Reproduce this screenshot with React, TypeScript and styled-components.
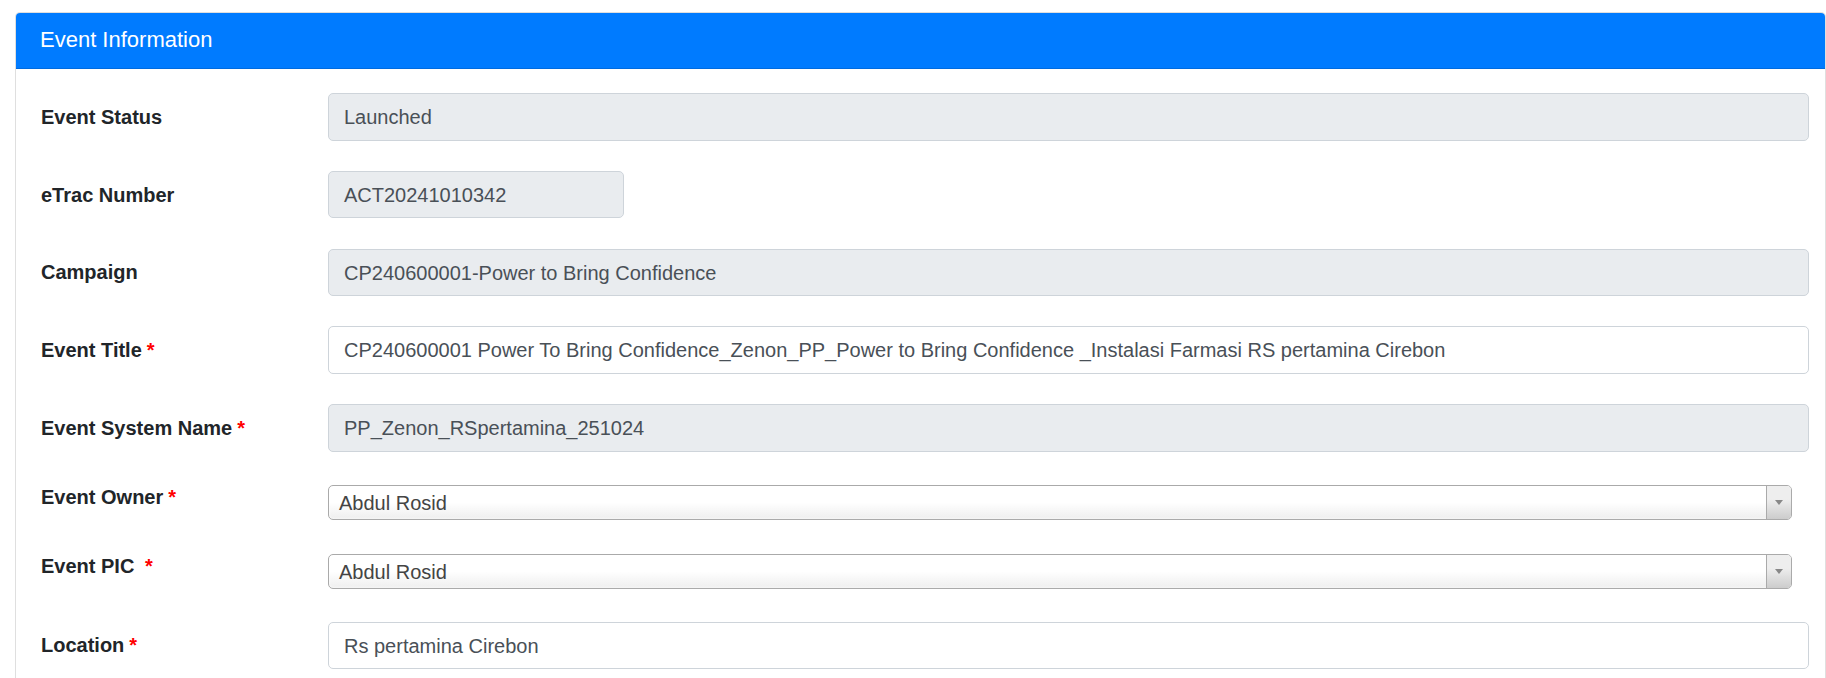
import React from "react";
import styled, { createGlobalStyle } from "styled-components";

const GlobalStyle = createGlobalStyle`
  html, body {
    margin: 0;
    padding: 0;
    background: #fff;
    font-family: "Liberation Sans", Arial, sans-serif;
    overflow: hidden;
  }
  * { box-sizing: border-box; }
`;

const Page = styled.div`
  padding: 12px 0 0 15px;
`;

const Card = styled.section`
  width: 1811px;
  border: 1px solid rgba(0, 0, 0, 0.125);
  border-radius: 5px;
  background: #fff;
  overflow: hidden;
`;

const CardHeader = styled.header`
  background: #007bff;
  color: #fff;
  padding: 15px 25px;
  margin: -1px -1px 0 -1px;
  border-bottom: 1px solid rgba(0, 0, 0, 0.125);
  border-radius: 5px 5px 0 0;
  font-size: 22px;
  line-height: 26px;
`;

const CardBody = styled.div`
  padding: 24px 16px 40px 25px;
  display: flex;
  flex-direction: column;
`;

const Row = styled.div<{ $top: number; $align?: "center" | "start" }>`
  display: grid;
  grid-template-columns: 287px 1fr;
  align-items: ${(p) => p.$align ?? "center"};
  margin-top: ${(p) => p.$top}px;
`;

const Label = styled.label`
  display: flex;
  align-items: center;
  min-height: 47.5px;
  font-weight: 700;
  font-size: 20px;
  line-height: 30px;
  color: #212529;
  white-space: pre;
`;

const Required = styled.span`
  color: #ff0000;
  margin-left: 5px;
`;

const TextBox = styled.div<{ $disabled?: boolean; $width?: string }>`
  width: ${(p) => p.$width ?? "100%"};
  height: 47.5px;
  padding: 8px 15px;
  border: 1px solid #ced4da;
  border-radius: 5px;
  background: ${(p) => (p.$disabled ? "#e9ecef" : "#fff")};
  color: #495057;
  font-size: 20px;
  line-height: 30px;
  white-space: nowrap;
  overflow: hidden;
`;

const Select = styled.div`
  width: calc(100% - 17px);
  height: 35px;
  margin-top: 11px;
  display: flex;
  border: 1px solid #aaa;
  border-radius: 5px;
  background: linear-gradient(to top, #eeeeee 0%, #ffffff 50%);
  box-shadow: 0 0 3px #fff inset;
  overflow: hidden;
`;

const SelectValue = styled.span`
  flex: 1;
  padding-left: 10px;
  color: #444;
  font-size: 20px;
  line-height: 34px;
  white-space: nowrap;
`;

const SelectArrow = styled.span`
  width: 25px;
  display: flex;
  align-items: center;
  justify-content: center;
  border-left: 1px solid #aaa;
  background: linear-gradient(to top, #cccccc 0%, #eeeeee 60%);
  &::after {
    content: "";
    width: 0;
    height: 0;
    margin-top: 1px;
    border-left: 4.5px solid transparent;
    border-right: 4.5px solid transparent;
    border-top: 5px solid #888;
  }
`;

type Field =
  | { label: string; required?: boolean; kind: "text"; value: string; disabled?: boolean; width?: string; top: number }
  | { label: string; required?: boolean; kind: "select"; value: string; top: number };

const fields: Field[] = [
  { label: "Event Status", kind: "text", value: "Launched", disabled: true, top: 0 },
  { label: "eTrac Number", kind: "text", value: "ACT20241010342", disabled: true, width: "296px", top: 30.25 },
  { label: "Campaign", kind: "text", value: "CP240600001-Power to Bring Confidence", disabled: true, top: 30.25 },
  {
    label: "Event Title",
    required: true,
    kind: "text",
    value: "CP240600001 Power To Bring Confidence_Zenon_PP_Power to Bring Confidence _Instalasi Farmasi RS pertamina Cirebon",
    top: 30.25,
  },
  { label: "Event System Name", required: true, kind: "text", value: "PP_Zenon_RSpertamina_251024", disabled: true, top: 30.25 },
  { label: "Event Owner", required: true, kind: "select", value: "Abdul Rosid", top: 22 },
  { label: "Event PIC ", required: true, kind: "select", value: "Abdul Rosid", top: 21.5 },
  { label: "Location", required: true, kind: "text", value: "Rs pertamina Cirebon", top: 31.5 },
];

export default function App() {
  return (
    <>
      <GlobalStyle />
      <Page>
        <Card>
          <CardHeader>Event Information</CardHeader>
          <CardBody>
            {fields.map((f) => (
              <Row key={f.label} $top={f.top} $align={f.kind === "select" ? "start" : "center"}>
                <Label>
                  {f.label}
                  {f.required && <Required>*</Required>}
                </Label>
                {f.kind === "text" ? (
                  <TextBox $disabled={f.disabled} $width={f.width}>
                    {f.value}
                  </TextBox>
                ) : (
                  <Select>
                    <SelectValue>{f.value}</SelectValue>
                    <SelectArrow />
                  </Select>
                )}
              </Row>
            ))}
          </CardBody>
        </Card>
      </Page>
    </>
  );
}
